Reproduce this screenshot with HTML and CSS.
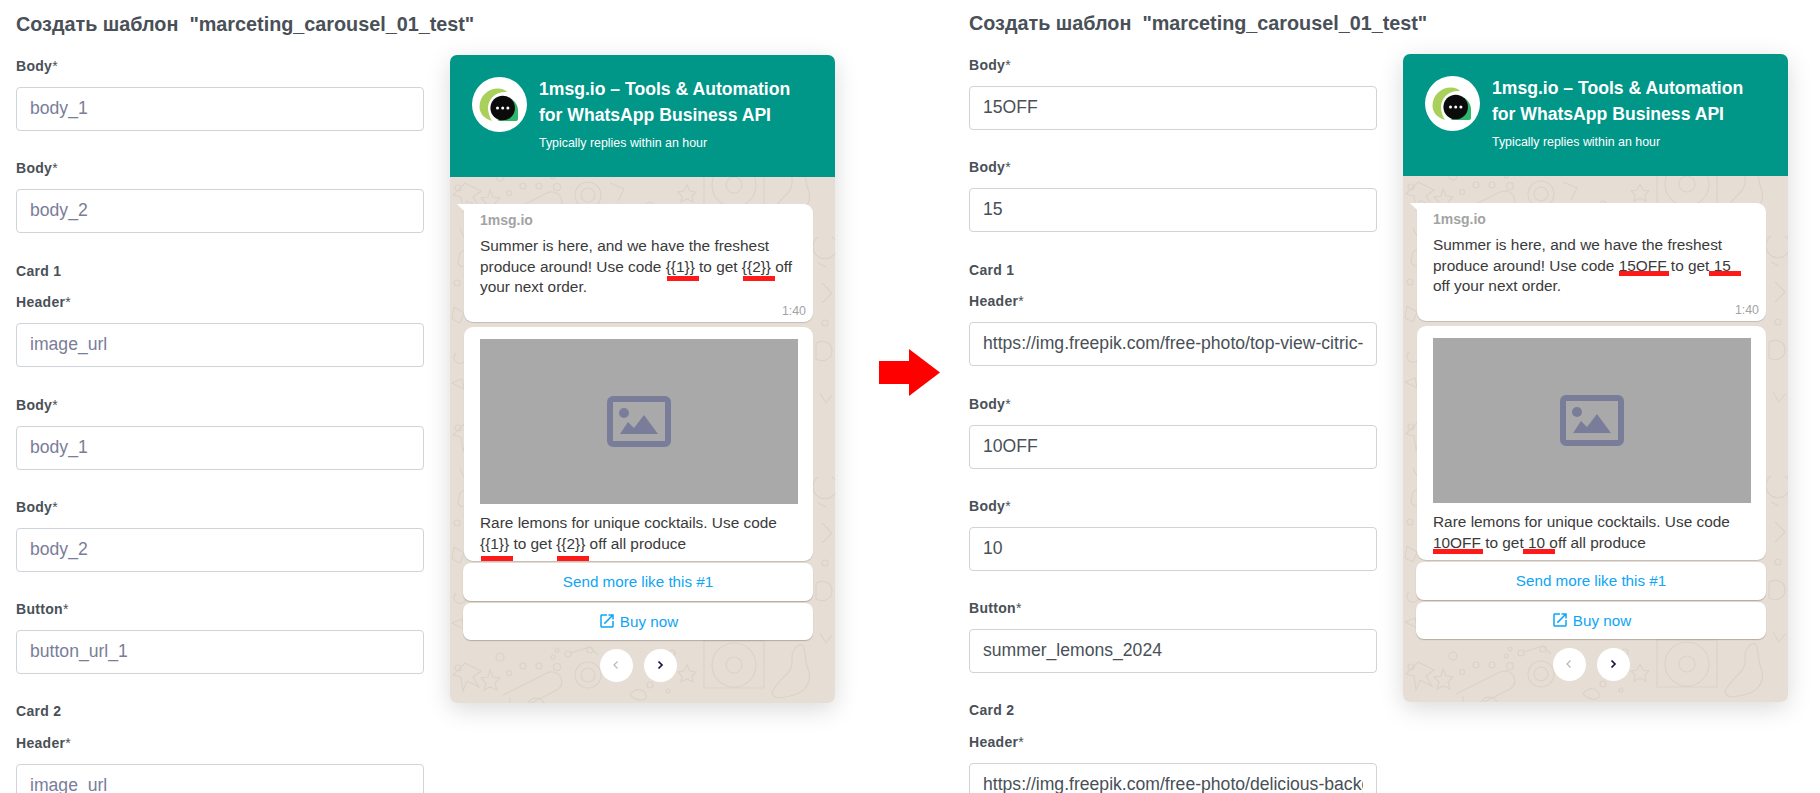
FILE: index.html
```html
<!DOCTYPE html>
<html lang="en">
<head>
    <meta charset="UTF-8">
    <meta name="viewport" content="width=device-width, initial-scale=1.0">
    <title>Создать шаблон</title>
    <link rel="stylesheet" href="styles.css">
</head>
<body>
    <div class="page">
        <!-- Before: empty template -->
        <section class="pane">
            <h1 class="pane-title">Создать шаблон &nbsp;"marceting_carousel_01_test"</h1>
            <div class="pane-body">
                <form class="form">
                    <div class="field"><label>Body<span class="req">*</span></label><input type="text" placeholder="body_1"></div>
                    <div class="field"><label>Body<span class="req">*</span></label><input type="text" placeholder="body_2"></div>
                    <div class="card-label">Card 1</div>
                    <div class="field"><label>Header<span class="req">*</span></label><input type="text" placeholder="image_url"></div>
                    <div class="field"><label>Body<span class="req">*</span></label><input type="text" placeholder="body_1"></div>
                    <div class="field"><label>Body<span class="req">*</span></label><input type="text" placeholder="body_2"></div>
                    <div class="field"><label>Button<span class="req">*</span></label><input type="text" placeholder="button_url_1"></div>
                    <div class="card-label">Card 2</div>
                    <div class="field"><label>Header<span class="req">*</span></label><input type="text" placeholder="image_url"></div>
                </form>
                <div class="phone">
                    <div class="phone-head">
                        <svg class="logo" viewBox="0 0 55 55">
                            <circle cx="27.5" cy="27.5" r="27.5" fill="#fff"/>
                            <path d="M7.5 30C7.5 19 16 11.5 26 11.5c4 0 7 1.500 9 3.500-11-1-19 7-19 16 0 5 2 10 4 13C13 42 7.500 37 7.500 30z" fill="#a8d05a"/>
                            <path d="M39 21.500c4.500 3 7 7.500 7 12V42q0 2-2 2H26z" fill="#2fb56c"/>
                            <circle cx="30.700" cy="31" r="12.300" fill="#0b0b0b"/>
                            <circle cx="25.500" cy="31" r="1.500" fill="#fff"/>
                            <circle cx="30.700" cy="31" r="1.500" fill="#fff"/>
                            <circle cx="35.900" cy="31" r="1.500" fill="#fff"/>
                        </svg>
                        <div class="phone-head-text">
                            <div class="phone-name">1msg.io – Tools &amp; Automation for WhatsApp Business API</div>
                            <div class="phone-status">Typically replies within an hour</div>
                        </div>
                    </div>
                    <div class="chat">
                        <div class="bubble bubble-first">
                            <div class="sender">1msg.io</div>
                            <div class="msg-text">Summer is here, and we have the freshest produce around! Use code <span class="mark">{{1}}</span> to get <span class="mark">{{2}}</span> off your next order.</div>
                            <div class="time">1:40</div>
                        </div>
                        <div class="bubble bubble-card">
                            <div class="media">
                                <svg class="media-icon" viewBox="0 0 64 51">
                                    <rect x="3" y="3" width="58" height="45" rx="3" fill="none" stroke="#7a7d99" stroke-width="6"/>
                                    <circle cx="17" cy="17" r="5" fill="#7a7d99"/>
                                    <polygon points="13,38 21,26 27,32 37,19 51,38" fill="#7a7d99"/>
                                </svg>
                            </div>
                            <div class="card-text">Rare lemons for unique cocktails. Use code <span class="mark mark-low">{{1}}</span> to get <span class="mark mark-low">{{2}}</span> off all produce</div>
                        </div>
                        <div class="chat-btn">Send more like this #1</div>
                        <div class="chat-btn">
                            <svg class="btn-icon" viewBox="0 0 24 24"><path d="M19 19H5V5h7V3H5c-1.11 0-2 .9-2 2v14c0 1.1.89 2 2 2h14c1.1 0 2-.9 2-2v-7h-2v7zM14 3v2h3.59l-9.83 9.83 1.41 1.41L19 6.41V10h2V3h-7z"/></svg>
                            Buy now
                        </div>
                        <div class="carousel-nav">
                            <span class="nav-btn nav-off"><svg viewBox="0 0 10 10"><path d="M6.500 1.500 3 5l3.500 3.500"/></svg></span>
                            <span class="nav-btn"><svg viewBox="0 0 10 10"><path d="M3.500 1.500 7 5 3.500 8.500"/></svg></span>
                        </div>
                    </div>
                </div>
            </div>
        </section>

        <svg class="arrow" viewBox="0 0 61 47"><polygon points="0,12 30,12 30,0 61,23.500 30,47 30,35 0,35"/></svg>

        <!-- After: filled template -->
        <section class="pane pane-after">
            <h1 class="pane-title">Создать шаблон &nbsp;"marceting_carousel_01_test"</h1>
            <div class="pane-body">
                <form class="form">
                    <div class="field"><label>Body<span class="req">*</span></label><input type="text" value="15OFF"></div>
                    <div class="field"><label>Body<span class="req">*</span></label><input type="text" value="15"></div>
                    <div class="card-label">Card 1</div>
                    <div class="field"><label>Header<span class="req">*</span></label><input type="text" value="https://img.freepik.com/free-photo/top-view-citric-lemons.jpg"></div>
                    <div class="field"><label>Body<span class="req">*</span></label><input type="text" value="10OFF"></div>
                    <div class="field"><label>Body<span class="req">*</span></label><input type="text" value="10"></div>
                    <div class="field"><label>Button<span class="req">*</span></label><input type="text" value="summer_lemons_2024"></div>
                    <div class="card-label">Card 2</div>
                    <div class="field"><label>Header<span class="req">*</span></label><input type="text" value="https://img.freepik.com/free-photo/delicious-background.jpg"></div>
                </form>
                <div class="phone">
                    <div class="phone-head">
                        <svg class="logo" viewBox="0 0 55 55">
                            <circle cx="27.5" cy="27.5" r="27.5" fill="#fff"/>
                            <path d="M7.5 30C7.5 19 16 11.5 26 11.5c4 0 7 1.500 9 3.500-11-1-19 7-19 16 0 5 2 10 4 13C13 42 7.500 37 7.500 30z" fill="#a8d05a"/>
                            <path d="M39 21.500c4.500 3 7 7.500 7 12V42q0 2-2 2H26z" fill="#2fb56c"/>
                            <circle cx="30.700" cy="31" r="12.300" fill="#0b0b0b"/>
                            <circle cx="25.500" cy="31" r="1.500" fill="#fff"/>
                            <circle cx="30.700" cy="31" r="1.500" fill="#fff"/>
                            <circle cx="35.900" cy="31" r="1.500" fill="#fff"/>
                        </svg>
                        <div class="phone-head-text">
                            <div class="phone-name">1msg.io – Tools &amp; Automation for WhatsApp Business API</div>
                            <div class="phone-status">Typically replies within an hour</div>
                        </div>
                    </div>
                    <div class="chat">
                        <div class="bubble bubble-first">
                            <div class="sender">1msg.io</div>
                            <div class="msg-text">Summer is here, and we have the freshest produce around! Use code <span class="mark">15OFF</span> to get <span class="mark mark-wide">15</span> off your next order.</div>
                            <div class="time">1:40</div>
                        </div>
                        <div class="bubble bubble-card">
                            <div class="media">
                                <svg class="media-icon" viewBox="0 0 64 51">
                                    <rect x="3" y="3" width="58" height="45" rx="3" fill="none" stroke="#7a7d99" stroke-width="6"/>
                                    <circle cx="17" cy="17" r="5" fill="#7a7d99"/>
                                    <polygon points="13,38 21,26 27,32 37,19 51,38" fill="#7a7d99"/>
                                </svg>
                            </div>
                            <div class="card-text">Rare lemons for unique cocktails. Use code <span class="mark mark-low">10OFF</span> to get <span class="mark mark-low mark-wide">10</span> off all produce</div>
                        </div>
                        <div class="chat-btn">Send more like this #1</div>
                        <div class="chat-btn">
                            <svg class="btn-icon" viewBox="0 0 24 24"><path d="M19 19H5V5h7V3H5c-1.11 0-2 .9-2 2v14c0 1.1.89 2 2 2h14c1.1 0 2-.9 2-2v-7h-2v7zM14 3v2h3.59l-9.83 9.83 1.41 1.41L19 6.41V10h2V3h-7z"/></svg>
                            Buy now
                        </div>
                        <div class="carousel-nav">
                            <span class="nav-btn nav-off"><svg viewBox="0 0 10 10"><path d="M6.500 1.500 3 5l3.500 3.500"/></svg></span>
                            <span class="nav-btn"><svg viewBox="0 0 10 10"><path d="M3.500 1.500 7 5 3.500 8.500"/></svg></span>
                        </div>
                    </div>
                </div>
            </div>
        </section>
    </div>
</body>
</html>
```

FILE: styles.css
```css
/* Template editor, before and after */
html, body {
    height: 793px;
    overflow: hidden;
}

body {
    font-family: 'Liberation Sans', Arial, sans-serif;
    margin: 0;
    padding: 0;
    background: #fff;
    color: #495057;
}

.page {
    display: flex;
    align-items: flex-start;
}

.pane {
    flex: none;
    width: 819px;
    padding-left: 16px;
}

.pane-after {
    margin-left: 13px;
    margin-top: -1px;
}

.pane-title {
    margin: 0;
    padding-top: 13px;
    height: 42px;
    box-sizing: border-box;
    font-size: 19.8px;
    line-height: 22px;
    font-weight: bold;
    color: #495057;
}

.pane-body {
    display: flex;
    align-items: flex-start;
    gap: 26px;
    padding-top: 13px;
}

/* Form column */
.form {
    flex: none;
    width: 408px;
    margin-top: 1px;
}

.field {
    margin-bottom: 27.3px;
}

.field label,
.card-label {
    display: block;
    font-size: 14px;
    line-height: 20px;
    font-weight: bold;
    letter-spacing: 0.3px;
    color: #495057;
}

.field label {
    margin-bottom: 11px;
}

.req {
    font-weight: normal;
}

.card-label {
    margin-bottom: 11.7px;
}

.field input {
    display: block;
    width: 100%;
    height: 44px;
    box-sizing: border-box;
    padding: 0 13px 1px;
    border: 1px solid #ced4da;
    border-radius: 4px;
    background: #fff;
    font-family: inherit;
    font-size: 17.6px;
    color: #495057;
    outline: none;
}

.field input::placeholder {
    color: #7a7d99;
    opacity: 1;
}

/* Chat preview */
.phone {
    flex: none;
    width: 385px;
    border-radius: 7px;
    overflow: hidden;
    box-shadow: 0 6px 24px rgba(0, 0, 0, 0.15);
}

.phone-head {
    display: flex;
    height: 122px;
    box-sizing: border-box;
    padding: 22px 22px 0;
    gap: 12px;
    background: #009688;
    color: #fff;
}

.logo {
    flex: none;
    width: 55px;
    height: 55px;
}

.phone-head-text {
    flex: 1;
    margin-top: -1px;
}

.phone-name {
    font-size: 17.6px;
    line-height: 26px;
    font-weight: bold;
}

.phone-status {
    margin-top: 7px;
    font-size: 12.4px;
    line-height: 16px;
}

.chat {
    padding: 27px 22px 21px 14px;
    background-color: #e6ded5;
    background-position: left bottom;
    background-image: url("data:image/svg+xml,%3Csvg xmlns='http://www.w3.org/2000/svg' width='385' height='240' fill='none' stroke='%23dbd2c8' stroke-width='1.2'%3E%3Cpath d='M15 200l16 8-8 6 6 10-12-6-4 10-2-14-8-2zM40 207l3 7 7 1-5 5 2 7-7-3-6 3 2-7-5-5 7-1zM53 232l44-22c6-3 12 0 14 5s0 10-6 13l-36 18M60 240l0-6M78 240a9 9 0 0 1 16 0M120 190l20-6 8 8M125 212a13 13 0 1 0 26 0a13 13 0 1 0-26 0zM131 212a7 7 0 1 0 14 0a7 7 0 1 0-14 0zM160 200l14 6-6 12M180 232c6-8 14-6 16 0s-8 8-16 0zM237 202l3 6 6 1-4 4 1 6-6-3-6 3 1-6-4-4 6-1zM254 178h60v47h-60zM262 202a22 22 0 1 0 44 0a22 22 0 1 0-44 0zM276 202a8 8 0 1 0 16 0a8 8 0 1 0-16 0zM322 230c6-16 22-18 20-34-1-8 6-16 10-14s2 14 6 24 0 22-14 26-20 4-22-2zM10 30c6-6 14-2 12 6s-12 10-14 4zM4 84l10 6-4 10-8-4zM6 130a6 6 0 1 0 8 0M2 160l10-4 2 10zM368 14a12 12 0 1 0 14 0M372 60l10 10-10 10M366 120c8-4 16 0 16 8s-8 12-16 8zM370 170l6 10 6-8M368 40l8 4M10 6l4 8'/%3E%3Ccircle cx='50' cy='194' r='4'/%3E%3Ccircle cx='73' cy='203' r='3'/%3E%3Ccircle cx='89' cy='203' r='3'/%3E%3Ccircle cx='107' cy='204' r='3.500'/%3E%3Ccircle cx='107' cy='187' r='2'/%3E%3Ccircle cx='118' cy='191' r='3'/%3E%3Ccircle cx='140' cy='187' r='3'/%3E%3Ccircle cx='103' cy='194' r='2'/%3E%3Ccircle cx='59' cy='210' r='2.500'/%3E%3Ccircle cx='8' cy='205' r='3'/%3E%3Ccircle cx='200' cy='222' r='3'/%3E%3Ccircle cx='222' cy='190' r='3'/%3E%3Ccircle cx='218' cy='228' r='2'/%3E%3Ccircle cx='375' cy='100' r='3'/%3E%3Ccircle cx='7' cy='60' r='3'/%3E%3C/svg%3E");
}

.bubble {
    position: relative;
    background: #fff;
    border-radius: 9px;
    color: #3a3a3a;
    box-shadow: 0 1px 1px rgba(0, 0, 0, 0.15);
}

.bubble-first {
    padding: 6px 7px 3px 16px;
    border-top-left-radius: 0;
}

/* small tail on the first message */
.bubble-first::before {
    content: '';
    position: absolute;
    top: 0;
    left: -7px;
    width: 8px;
    height: 8px;
    background: #fff;
    clip-path: polygon(0 0, 100% 0, 100% 100%);
}

.sender {
    font-size: 14px;
    line-height: 20px;
    font-weight: bold;
    color: #a3a3a3;
}

.msg-text {
    margin-top: 6px;
    padding-right: 9px;
    font-size: 15.4px;
    line-height: 20.7px;
}

.time {
    margin-top: 5px;
    font-size: 12.4px;
    line-height: 16px;
    text-align: right;
    color: #a3a3a3;
}

.bubble-card {
    margin-top: 5px;
    padding: 12px 15px 6px 16px;
}

.media {
    display: flex;
    align-items: center;
    justify-content: center;
    height: 165px;
    background: #a9a9a9;
}

.media-icon {
    width: 64px;
    height: 51px;
}

.card-text {
    margin-top: 9px;
    font-size: 15.4px;
    line-height: 20.7px;
}

/* red marks under the variables */
.mark {
    position: relative;
    white-space: nowrap;
}

.mark::after {
    content: '';
    position: absolute;
    left: 1px;
    right: -4px;
    bottom: -6px;
    height: 5px;
    background: #ff1a1a;
}

.mark-low::after {
    bottom: -9px;
}

.pane-after .mark::after {
    left: 0;
    right: -2px;
    bottom: -2px;
}

.pane-after .mark-low::after {
    bottom: -3px;
}

.pane-after .mark-wide::after {
    left: -5px;
    right: -10px;
}

.chat-btn {
    display: flex;
    align-items: center;
    justify-content: center;
    gap: 4px;
    height: 38px;
    margin: 2px 0 0 -1px;
    background: #fff;
    border-radius: 8px;
    box-shadow: 0 1px 1px rgba(90, 75, 60, 0.35);
    font-size: 15.2px;
    color: #0ea5f5;
}

.chat-btn + .chat-btn {
    height: 37px;
}

.btn-icon {
    width: 18px;
    height: 18px;
    fill: #0ea5f5;
}

.carousel-nav {
    display: flex;
    justify-content: center;
    gap: 11px;
    margin: 9px 0 0 -1px;
}

.nav-btn {
    display: flex;
    align-items: center;
    justify-content: center;
    width: 33px;
    height: 33px;
    border-radius: 50%;
    background: #fff;
}

.nav-btn svg {
    width: 10px;
    height: 10px;
    fill: none;
    stroke: #14143c;
    stroke-width: 1.7;
}

.nav-off svg {
    stroke: #b5b8c4;
    stroke-width: 1.2;
}

.arrow {
    flex: none;
    width: 61px;
    height: 47px;
    margin: 349px 0 0 44px;
    fill: #ff0000;
}
```
